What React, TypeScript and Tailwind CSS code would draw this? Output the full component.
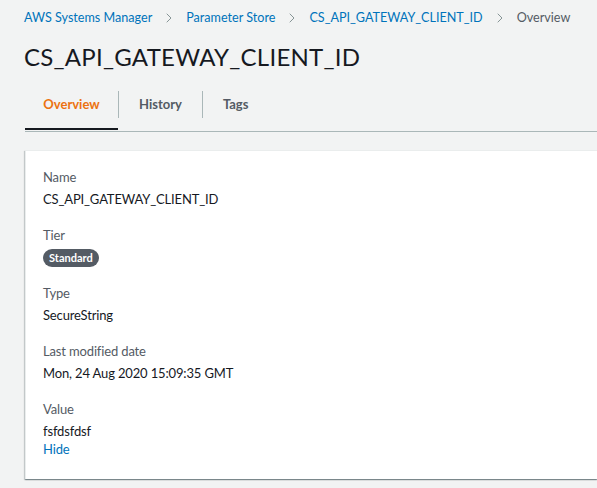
import { ChevronRight } from "lucide-react";

const crumbs = ["AWS Systems Manager", "Parameter Store", "CS_API_GATEWAY_CLIENT_ID"];

function Field({ label, children }: { label: string; children: React.ReactNode }) {
  return (
    <div className="flex flex-col">
      <span className="text-[13px] leading-[20px] text-[#545b64]">{label}</span>
      <div className="mt-[2px]">{children}</div>
    </div>
  );
}

export default function App() {
  return (
    <div
      className="min-h-[488px] w-[597px] overflow-hidden bg-[#f2f3f3] text-[#16191f]"
      style={{ fontFamily: 'Lato, "Noto Sans", sans-serif' }}
    >
      <nav className="flex items-center pl-[24px] pt-[8px] text-[12.6px] leading-[20px]">
        {crumbs.map((c) => (
          <span key={c} className="flex items-center">
            <a className="text-[#0073bb]">{c}</a>
            <ChevronRight className="mx-[9px] h-[16px] w-[16px] text-[#879596]" strokeWidth={1.5} />
          </span>
        ))}
        <span className="text-[#545b64]">Overview</span>
      </nav>

      <h1 className="mt-[12px] pl-[24px] text-[24px] leading-[34px] tracking-[0.25px] font-normal whitespace-nowrap">
        CS_API_GATEWAY_CLIENT_ID
      </h1>

      <div className="ml-[25px] mt-[17px] flex border-b border-[#aab7b8]">
        <div className="relative flex w-[93px] justify-center pt-[3px] pb-[17px]">
          <span className="text-[13px] leading-[20px] font-bold text-[#ec7211]">Overview</span>
          <div className="absolute bottom-[1px] left-0 right-0 h-[2px] bg-[#16191f]" />
        </div>
        <div className="mb-[13px] w-px bg-[#aab7b8]" />
        <div className="px-[20px] pt-[3px] pb-[17px] text-[13px] leading-[20px] font-bold text-[#545b64]">History</div>
        <div className="mb-[13px] w-px bg-[#aab7b8]" />
        <div className="px-[20px] pt-[3px] pb-[17px] text-[13px] leading-[20px] font-bold text-[#545b64]">Tags</div>
      </div>

      <div className="ml-[25px] mt-[18px] border-l border-t border-[#eaeded] bg-white pb-[20px] pl-[17px] pt-[16px] shadow-[0_1px_1px_0_rgba(0,28,36,0.3),1px_1px_1px_0_rgba(0,28,36,0.15),-1px_1px_1px_0_rgba(0,28,36,0.15)]">
        <div className="flex flex-col gap-[16px] text-[13px] leading-[20px] tracking-[-0.15px]">
          <Field label="Name">
            <span>CS_API_GATEWAY_CLIENT_ID</span>
          </Field>
          <Field label="Tier">
            <span className="inline-block rounded-full bg-[#545b64] px-[6px] text-[11px] leading-[18px] tracking-normal font-bold text-white">
              Standard
            </span>
          </Field>
          <Field label="Type">
            <span>SecureString</span>
          </Field>
          <Field label="Last modified date">
            <span>Mon, 24 Aug 2020 15:09:35 GMT</span>
          </Field>
          <Field label="Value">
            <div className="flex flex-col">
              <span>fsfdsfdsf</span>
              <a className="-mt-[2px] text-[#0073bb]">Hide</a>
            </div>
          </Field>
        </div>
      </div>
    </div>
  );
}
